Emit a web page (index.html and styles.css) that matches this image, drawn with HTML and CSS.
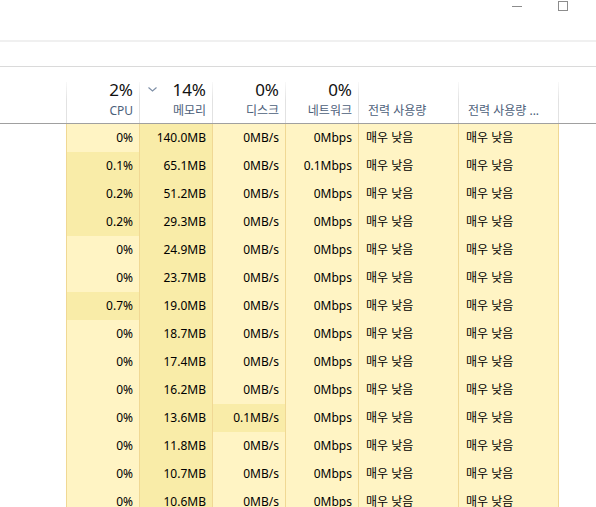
FILE: index.html
```html
<!DOCTYPE html>
<html lang="ko">
<head>
    <meta charset="UTF-8">
    <meta name="viewport" content="width=device-width, initial-scale=1.0">
    <title>작업 관리자</title>
    <link rel="stylesheet" href="styles.css">
</head>
<body>
    <!-- 창 제목 표시줄 -->
    <div class="titlebar">
        <div class="win-btn"><span class="min-icon"></span></div>
        <div class="win-btn"><span class="max-icon"></span></div>
    </div>

    <div class="tabs"></div>
    <div class="spacer"></div>

    <!-- 열 머리글 -->
    <div class="grid header">
        <div class="hcell first"></div>
        <div class="hcell">
            <div class="pct">2%</div>
            <div class="label">CPU</div>
        </div>
        <div class="hcell">
            <div class="pct sorted">
                <svg class="chevron" width="9" height="5" viewBox="0 0 9 5"><polyline points="0.5,0.5 4.5,4 8.5,0.5" fill="none" stroke="#7d8ea6" stroke-width="1.1"/></svg>
                <span>14%</span>
            </div>
            <div class="label">메모리</div>
        </div>
        <div class="hcell">
            <div class="pct">0%</div>
            <div class="label">디스크</div>
        </div>
        <div class="hcell">
            <div class="pct">0%</div>
            <div class="label">네트워크</div>
        </div>
        <div class="hcell text">
            <div class="label">전력 사용량</div>
        </div>
        <div class="hcell text">
            <div class="label">전력 사용량 ...</div>
        </div>
        <div class="hcell last"></div>
    </div>

    <div id="rows"></div>

    <script>
        // [cpu, 메모리, 디스크, 네트워크, cpu 강조, 디스크 강조]
        const processes = [
            ['0%', '140.0MB', '0MB/s', '0Mbps', false, false],
            ['0.1%', '65.1MB', '0MB/s', '0.1Mbps', true, false],
            ['0.2%', '51.2MB', '0MB/s', '0Mbps', true, false],
            ['0.2%', '29.3MB', '0MB/s', '0Mbps', true, false],
            ['0%', '24.9MB', '0MB/s', '0Mbps', false, false],
            ['0%', '23.7MB', '0MB/s', '0Mbps', false, false],
            ['0.7%', '19.0MB', '0MB/s', '0Mbps', true, false],
            ['0%', '18.7MB', '0MB/s', '0Mbps', false, false],
            ['0%', '17.4MB', '0MB/s', '0Mbps', false, false],
            ['0%', '16.2MB', '0MB/s', '0Mbps', false, false],
            ['0%', '13.6MB', '0.1MB/s', '0Mbps', false, true],
            ['0%', '11.8MB', '0MB/s', '0Mbps', false, false],
            ['0%', '10.7MB', '0MB/s', '0Mbps', false, false],
            ['0%', '10.6MB', '0MB/s', '0Mbps', false, false]
        ];

        const rows = document.getElementById('rows');

        processes.forEach(function (p) {
            const row = document.createElement('div');
            row.className = 'grid row';

            const cells = [
                ['cell first', ''],
                ['cell num' + (p[4] ? ' hot' : ''), p[0]],
                ['cell num hot', p[1]],
                ['cell num' + (p[5] ? ' hot' : ''), p[2]],
                ['cell num', p[3]],
                ['cell power', '매우 낮음'],
                ['cell power', '매우 낮음'],
                ['cell last', '']
            ];

            cells.forEach(function (c) {
                const cell = document.createElement('div');
                cell.className = c[0];
                cell.textContent = c[1];
                row.appendChild(cell);
            });

            rows.appendChild(row);
        });
    </script>
</body>
</html>
```

FILE: styles.css
```css
body {
    margin: 0;
    font-family: "Noto Sans", "Noto Sans CJK KR", sans-serif;
    background-color: #fff;
    color: #000;
    height: 507px;
    overflow: hidden;
}

/* 제목 표시줄 */
.titlebar {
    height: 40px;
    display: flex;
    justify-content: flex-end;
    align-items: flex-start;
    padding-right: 10px;
}

.win-btn {
    width: 46px;
    height: 12px;
    display: flex;
    justify-content: center;
    align-items: center;
}

.min-icon {
    width: 10px;
    height: 1px;
    background-color: #8c8c8c;
}

.max-icon {
    width: 8px;
    height: 8px;
    border: 1px solid #8c8c8c;
}

.tabs {
    height: 24px;
    border-top: 2px solid #f0f0f0;
    border-bottom: 1px solid #dadada;
}

.spacer {
    height: 15px;
}

/* 표 */
.grid {
    display: grid;
    grid-template-columns: 66px 73px 73px 73px 73px 100px 100px 1fr;
}

.header {
    height: 41px;
    border-bottom: 1px solid #a0a0a0;
}

.hcell {
    border-left: 1px solid #e2e2e2;
    border-image: linear-gradient(to bottom, #fafafa, #e2e2e2 45%) 1;
    padding-right: 6px;
    text-align: right;
}

.hcell.first {
    border-left: none;
    border-image: none;
}

.pct {
    font-size: 17px;
    line-height: 16px;
    color: #111;
}

.pct.sorted {
    display: flex;
    justify-content: space-between;
    align-items: flex-start;
}

.chevron {
    margin-left: 8px;
    margin-top: 5px;
}

.label {
    margin-top: 4px;
    font-size: 12px;
    line-height: 18px;
    color: #4c607a;
    white-space: nowrap;
}

.hcell.text {
    text-align: left;
    padding-left: 9px;
    padding-right: 0;
    padding-top: 16px;
}

.row {
    height: 28px;
    font-size: 12px;
    line-height: 28px;
}

.cell {
    border-left: 1px solid #f0d894;
    background-color: #fff4c4;
    white-space: nowrap;
}

.cell.first {
    border-left: none;
    background-color: #fff;
}

.cell.last {
    background-color: #fff;
}

.cell.num {
    text-align: right;
    padding-right: 6px;
}

.cell.hot {
    background-color: #f9eca8;
}

.cell.power {
    padding-left: 7px;
}
```
